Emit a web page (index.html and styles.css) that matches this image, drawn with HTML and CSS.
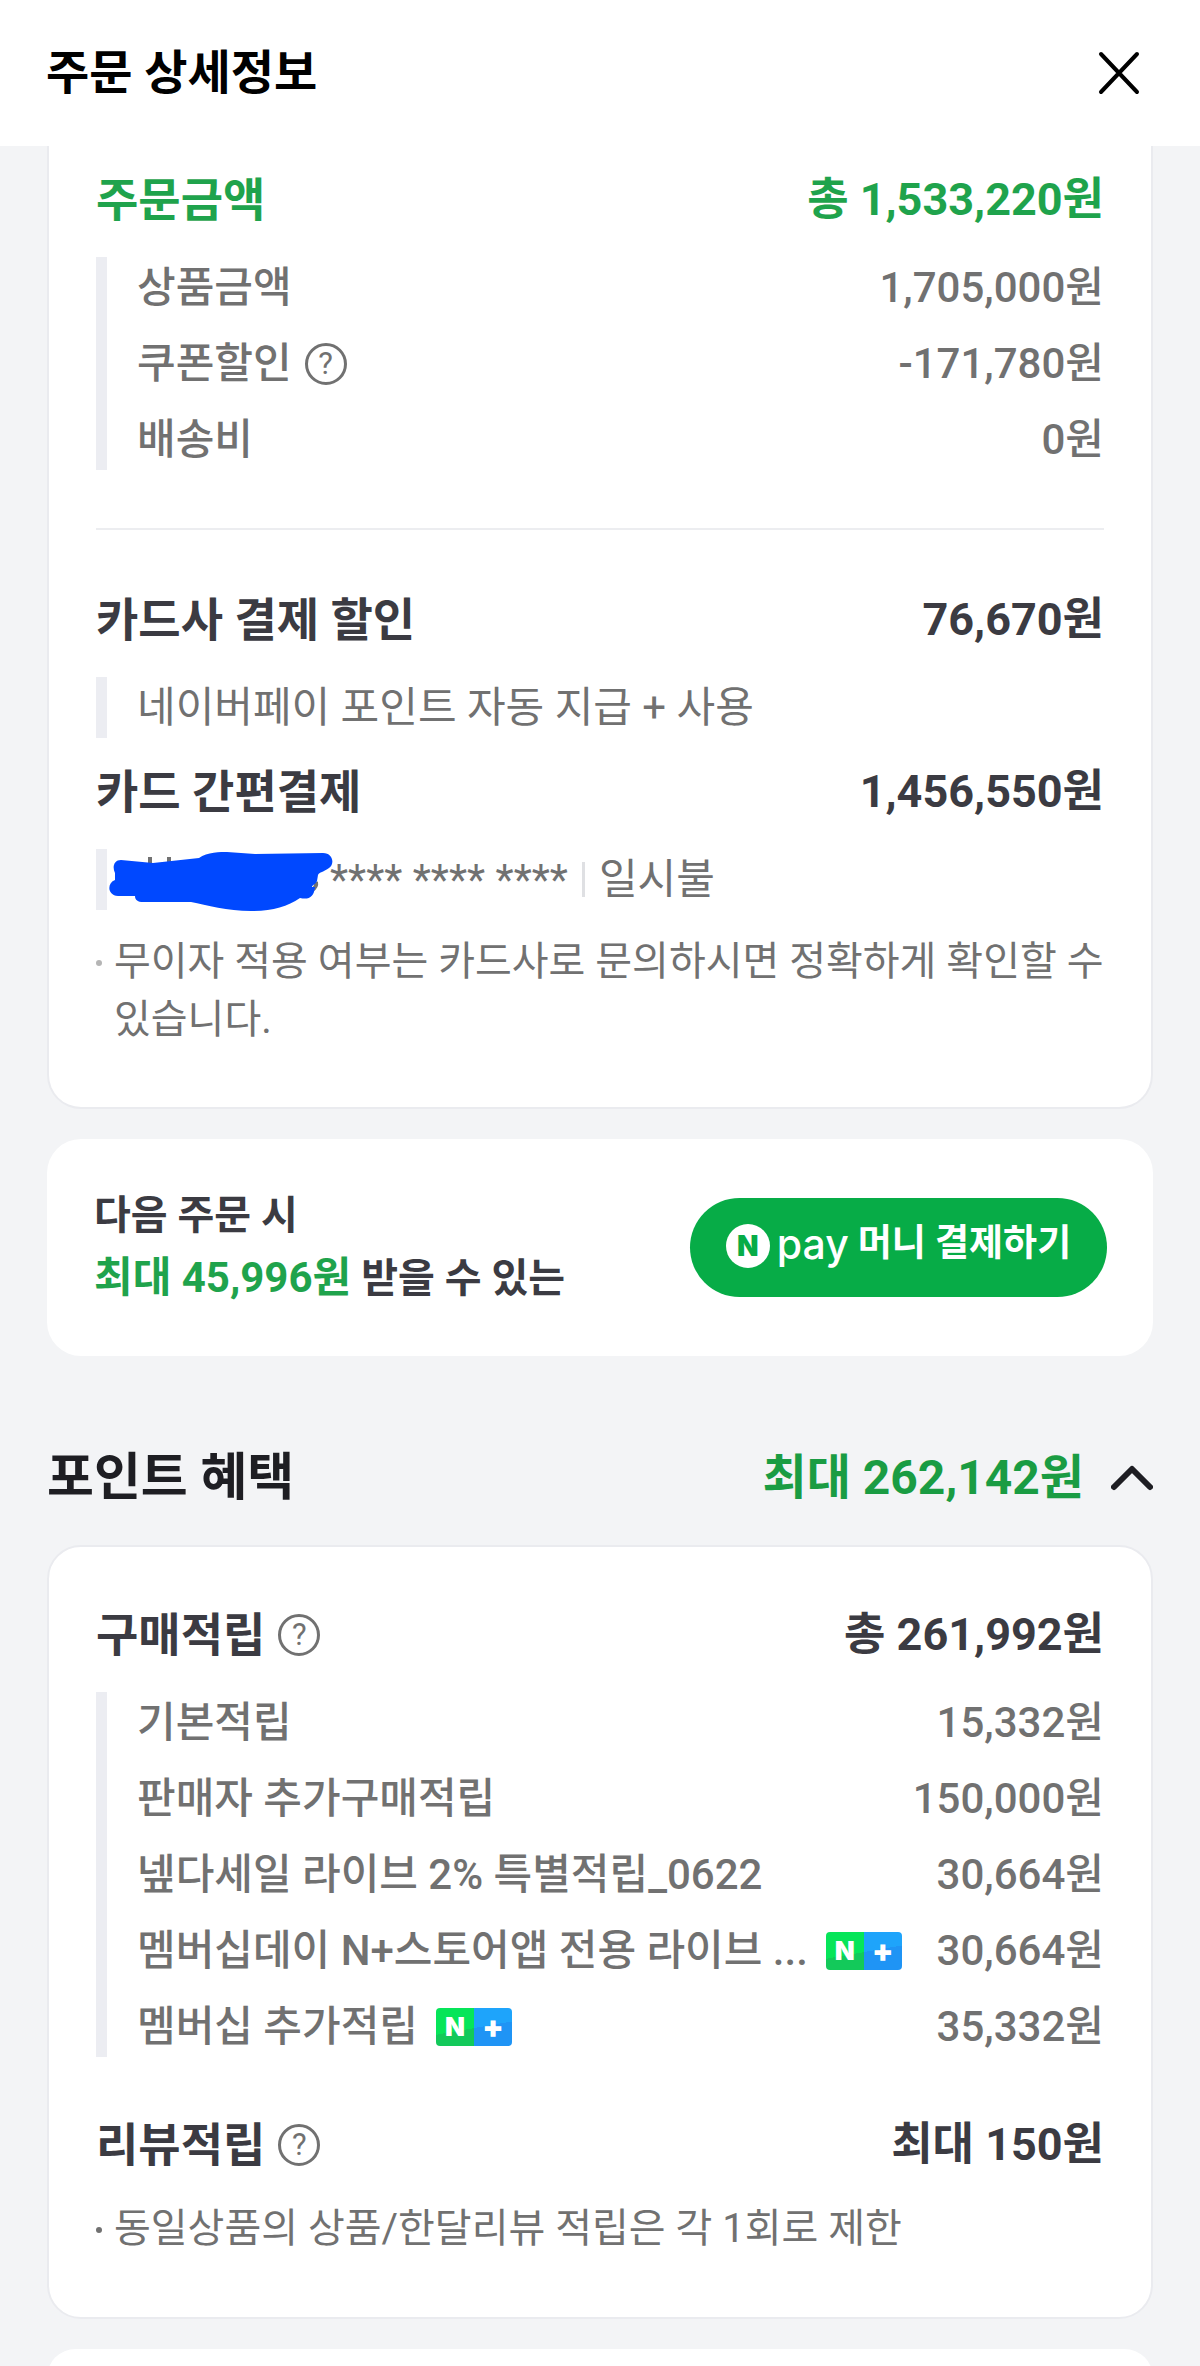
FILE: index.html
```html
<!DOCTYPE html>
<html lang="ko">
<head>
<meta charset="utf-8">
<meta name="viewport" content="width=device-width, initial-scale=1">
<title>주문 상세정보</title>
<link rel="stylesheet" href="styles.css">
</head>
<body>
<header class="topbar">
  <h1 class="topbar-title">주문 상세정보</h1>
  <button class="icon-button" type="button" aria-label="닫기">
    <svg class="icon-close" viewBox="0 0 42 46" aria-hidden="true"><path d="M3 4 39 42M39 4 3 42"/></svg>
  </button>
</header>

<main class="page">
  <section class="card card-order">
    <div class="row head green"><h2 class="label">주문금액</h2><strong>총 1,533,220원</strong></div>
    <ul class="details">
      <li class="row item"><span>상품금액</span><span>1,705,000원</span></li>
      <li class="row item"><span class="with-icon">쿠폰할인<button class="help" type="button" aria-label="쿠폰할인 도움말">?</button></span><span>-171,780원</span></li>
      <li class="row item"><span>배송비</span><span>0원</span></li>
    </ul>
    <hr class="divider">
    <div class="row head"><h2 class="label">카드사 결제 할인</h2><strong>76,670원</strong></div>
    <div class="details plain">네이버페이 포인트 자동 지급 + 사용</div>
    <div class="row head next"><h2 class="label">카드 간편결제</h2><strong>1,456,550원</strong></div>
    <div class="details plain card-line">
      <span class="masked">
        <svg class="scribble" viewBox="0 0 224 64" aria-hidden="true">
          <path class="tick" d="M41 6v8M60 6v8"/>
          <path class="tick" d="M207 31q1 5-4 8"/>
          <path class="ink" d="M12 9 44 12 90 7C98 1 112 1 118 1L146 3 214 2C224 2 226 13 220 17C215 21 210 21 209 24L208 30C207 33 203 34 203 36L206 36C205 46 200 49 191 47C178 56 163 60 142 60C118 60 98 54 82 51L34 51C29 51 26 49 26 45L9 45C-2 44-2 32 6 29L6 22C3 16 5 9 12 9Z"/>
        </svg>
      </span>
      <span>**** **** ****</span>
      <span class="pipe"></span>
      <span>일시불</span>
    </div>
    <ul class="notes muted">
      <li>무이자 적용 여부는 카드사로 문의하시면 정확하게 확인할 수 있습니다.</li>
    </ul>
  </section>

  <section class="card promo">
    <p class="promo-text">다음 주문 시<br><strong class="promo-amount">최대 45,996원</strong> 받을 수 있는</p>
    <button class="pay-button" type="button">
      <span class="pay-mark">N</span><span class="pay-word">pay</span><span class="pay-label">머니 결제하기</span>
    </button>
  </section>

  <div class="row section-head">
    <h2 class="section-title">포인트 혜택</h2>
    <div class="section-total">
      <strong>최대 262,142원</strong>
      <button class="icon-button" type="button" aria-label="접기">
        <svg class="icon-chevron" viewBox="0 0 42 26" aria-hidden="true"><path d="M3 22 21 4 39 22"/></svg>
      </button>
    </div>
  </div>

  <section class="card card-points">
    <div class="row head">
      <h3 class="label with-icon">구매적립<button class="help" type="button" aria-label="구매적립 도움말">?</button></h3>
      <strong>총 261,992원</strong>
    </div>
    <ul class="details">
      <li class="row item"><span>기본적립</span><span>15,332원</span></li>
      <li class="row item"><span>판매자 추가구매적립</span><span>150,000원</span></li>
      <li class="row item"><span>넾다세일 라이브 2% 특별적립_0622</span><span>30,664원</span></li>
      <li class="row item"><span class="with-icon wide">멤버십데이 N+스토어앱 전용 라이브 ...<span class="badge"><b>N</b><b>+</b></span></span><span>30,664원</span></li>
      <li class="row item"><span class="with-icon wide">멤버십 추가적립<span class="badge"><b>N</b><b>+</b></span></span><span>35,332원</span></li>
    </ul>
    <div class="row head review">
      <h3 class="label with-icon">리뷰적립<button class="help" type="button" aria-label="리뷰적립 도움말">?</button></h3>
      <strong>최대 150원</strong>
    </div>
    <ul class="notes">
      <li>동일상품의 상품/한달리뷰 적립은 각 1회로 제한</li>
    </ul>
  </section>

  <section class="card card-next" aria-hidden="true"></section>
</main>
</body>
</html>
```
FILE: styles.css
```css
* {
  box-sizing: border-box;
}

body {
  margin: 0;
  background: #f3f4f6;
  color: #3b3b42;
  font-family: Roboto, "Noto Sans CJK KR", sans-serif;
}

h1, h2, h3, p, ul {
  margin: 0;
  padding: 0;
}

ul {
  list-style: none;
}

button {
  margin: 0;
  padding: 0;
  border: 0;
  background: none;
  color: inherit;
  font-family: inherit;
}

svg {
  display: block;
  fill: none;
  stroke-linecap: round;
  stroke-linejoin: round;
}

/* Top bar */
.topbar {
  display: flex;
  align-items: center;
  justify-content: space-between;
  padding: 38px 60px 38px 46px;
  background: #fff;
}

.topbar-title {
  color: #000;
  font-size: 47px;
  line-height: 70px;
  font-weight: 700;
}

.icon-close {
  width: 42px;
  height: 46px;
  stroke: #000;
  stroke-width: 4;
}

/* Cards */
.page {
  overflow: hidden;
  padding: 0 47px;
}

.card {
  border: 2px solid #eaebef;
  border-radius: 34px;
  background: #fff;
}

.card-order {
  padding: 18px 47px 58px;
  border-top: 0;
  border-radius: 0 0 34px 34px;
}

.row {
  display: flex;
  align-items: center;
  justify-content: space-between;
}

.head {
  margin-bottom: 21px;
  font-size: 45px;
  line-height: 72px;
}

.head.next {
  margin-top: 18px;
}

.head.review {
  margin: 52px 0 19px;
}

.label {
  font-size: 46px;
  font-weight: 700;
}

.green {
  color: #1fa34c;
}

.details {
  display: flex;
  flex-direction: column;
  gap: 15px;
  padding-left: 30px;
  border-left: 11px solid #ecedf2;
  color: #717171;
  font-size: 42px;
  line-height: 61px;
  font-weight: 500;
}

.plain {
  font-weight: 400;
}

.divider {
  margin: 58px 0 54px;
  border: 0;
  border-top: 2px solid #ecedf0;
}

.with-icon {
  display: flex;
  align-items: center;
  gap: 13px;
}

.item .wide {
  gap: 18px;
}

.help {
  width: 42px;
  height: 42px;
  border: 3px solid #717171;
  border-radius: 50%;
  color: #717171;
  font-size: 31px;
  line-height: 36px;
  font-weight: 400;
}

.card-line {
  flex-direction: row;
  align-items: center;
  gap: 14px;
}

.masked {
  position: relative;
  width: 179px;
  height: 61px;
}

.scribble {
  position: absolute;
  top: 2px;
  left: -28px;
  width: 224px;
  height: 64px;
}

.ink {
  fill: #0048ff;
}

.tick {
  stroke: #717171;
  stroke-width: 4;
  stroke-linecap: butt;
}

.pipe {
  width: 3px;
  height: 35px;
  background: #dfe0e3;
}

.notes {
  margin-right: -8px;
  color: #717171;
  font-size: 40px;
  line-height: 58px;
}

.details + .notes {
  margin-top: 23px;
}

.notes li {
  display: flex;
  gap: 12px;
}

.notes li::before {
  content: "";
  flex: none;
  width: 6px;
  height: 6px;
  margin-top: 27px;
  border-radius: 50%;
  background: #717171;
}

.notes.muted li::before {
  background: #b5b5b5;
}

/* Promotion */
.promo {
  display: flex;
  align-items: center;
  justify-content: space-between;
  margin-top: 30px;
  padding: 46px 46px 46px 47px;
  border: 0;
}

.promo-text {
  font-size: 40px;
  line-height: 62px;
  font-weight: 700;
}

.promo-amount {
  color: #1fa34c;
  font-size: 42px;
  font-weight: 700;
}

.pay-button {
  display: flex;
  align-items: center;
  justify-content: center;
  width: 417px;
  padding: 18px 0 21px;
  border-radius: 50px;
  background: #07ac47;
  color: #fff;
  font-size: 37px;
  line-height: 56px;
  font-weight: 700;
}

.pay-mark {
  width: 44px;
  height: 44px;
  border-radius: 50%;
  background: #fff;
  color: #07ac47;
  font-family: Inter, sans-serif;
  font-size: 28px;
  line-height: 44px;
  font-weight: 900;
}

.pay-word {
  margin: 0 9px 0 7px;
  font-family: Inter, sans-serif;
  font-size: 41px;
  font-weight: 500;
}

.pay-word,
.pay-label {
  padding-bottom: 4px;
}

/* Points */
.section-head {
  margin: 84px 0 30px;
  line-height: 75px;
}

.section-title {
  color: #1e1e23;
  font-size: 51px;
  font-weight: 700;
}

.section-total {
  display: flex;
  align-items: center;
  gap: 27px;
  color: #1a9c43;
  font-size: 48px;
}

.icon-chevron {
  width: 42px;
  height: 26px;
  stroke: #1e1e23;
  stroke-width: 6;
}

.card-points {
  padding: 52px 47px 59px;
}

.badge {
  display: flex;
  width: 76px;
  color: #fff;
  font-family: Inter, sans-serif;
  font-size: 26px;
  line-height: 38px;
  text-align: center;
}

.badge b {
  flex: 1;
  border-radius: 4px 0 0 4px;
  background: linear-gradient(170deg, #06e559 60%, #13c95a 60%);
  font-weight: 900;
}

.badge b + b {
  border-radius: 0 4px 4px 0;
  background: linear-gradient(170deg, #1ea4fb 45%, #1f94f5 45%);
  font-size: 31px;
}

/* The following card starts at the fold and is cut off by the page edge */
.card-next {
  height: 57px;
  margin: 30px 0 -40px;
  border: 0;
}
```
